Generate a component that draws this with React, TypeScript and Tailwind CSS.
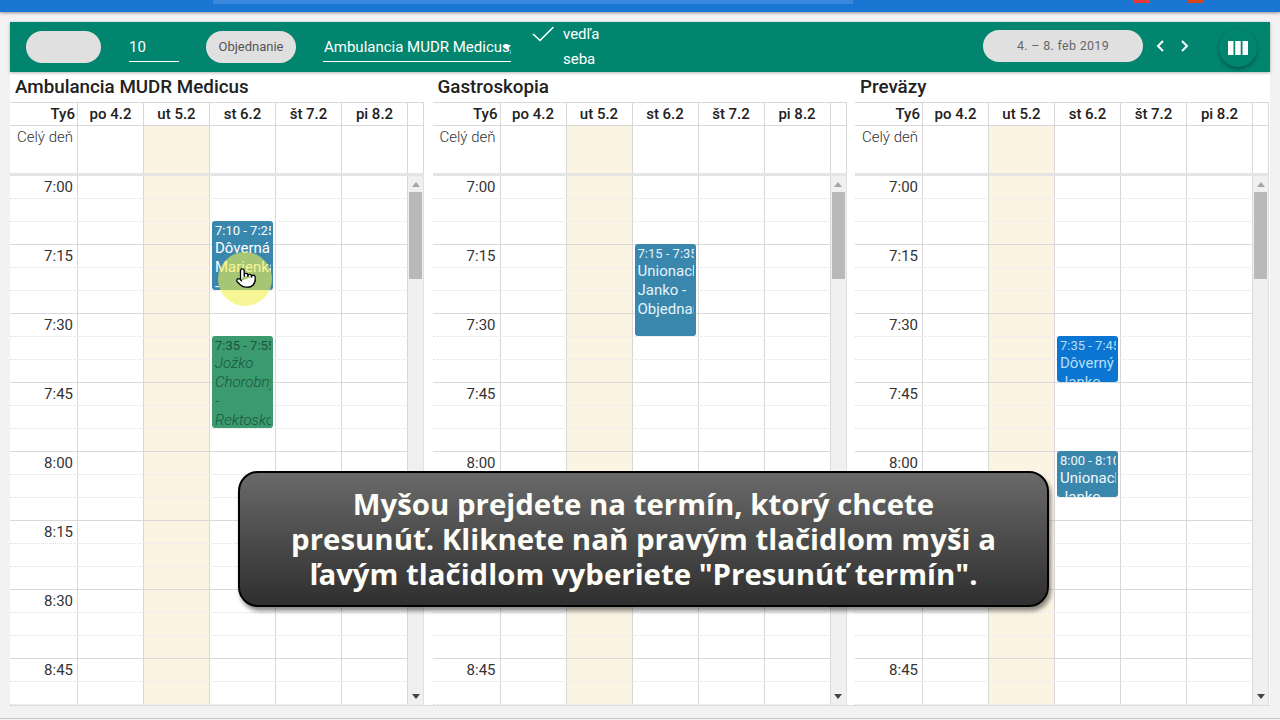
import { Pointer } from "lucide-react";

const days = ["po 4.2", "ut 5.2", "st 6.2", "št 7.2", "pi 8.2"];
const times = ["7:00", "7:15", "7:30", "7:45", "8:00", "8:15", "8:30", "8:45"];
const rows = Array.from({ length: 24 }, (_, i) => i);

type Ev = {
  top: number;
  height: number;
  time: string;
  lines: string[];
  color: string;
};

const calendars: { title: string; events: Ev[] }[] = [
  {
    title: "Ambulancia MUDR Medicus",
    events: [
      { top: 46, height: 69, time: "7:10 - 7:25", lines: ["Dôverná", "Marienka", "-"], color: "bg-[#3a87ad] text-white" },
      { top: 161, height: 92, time: "7:35 - 7:55", lines: ["Jožko", "Chorobný", "-", "Rektoskopia"], color: "bg-[#3c9a6f] text-[#17563c] italic font-light" },
    ],
  },
  {
    title: "Gastroskopia",
    events: [
      { top: 69, height: 92, time: "7:15 - 7:35", lines: ["Unionachl", "Janko -", "Objednanie"], color: "bg-[#3a87ad] text-[#e4f3fb]" },
    ],
  },
  {
    title: "Preväzy",
    events: [
      { top: 161, height: 46, time: "7:35 - 7:45", lines: ["Dôverný", "Janko"], color: "bg-[#0b76d1] text-[#b5def8]" },
      { top: 276, height: 46, time: "8:00 - 8:10", lines: ["Unionachl", "Janko"], color: "bg-[#3a87ad] text-[#eef7fc]" },
    ],
  },
];

function Calendar({ title, events, cursor }: { title: string; events: Ev[]; cursor?: boolean }) {
  return (
    <div className="w-[414px] flex flex-col">
      <div className="h-[30px] pl-[5px] flex items-center text-[18.8px] font-medium text-[#212121] leading-none pt-[1px]">{title}</div>

      <div className="flex h-[22px] border-t border-[#d8d8d8] border-b text-[15px] font-medium text-[#212121] box-content">
        <div className="w-[68px] border-r border-[#d8d8d8] text-right pr-[2px] leading-[22px]">Ty6</div>
        {days.map((d) => (
          <div key={d} className="w-[66px] border-r border-[#d8d8d8] text-center leading-[22px]">{d}</div>
        ))}
        <div className="flex-1 border-r border-[#d8d8d8]" />
      </div>

      <div className="flex h-[47px] border-b-[3px] border-[#e4e4e4] box-content">
        <div className="w-[68px] border-r border-[#d8d8d8] text-right pr-[4px] text-[15px] font-light text-[#333]">Celý deň</div>
        {days.map((d, i) => (
          <div key={d} className={`w-[66px] border-r border-[#d8d8d8] ${i === 1 ? "bg-[#fbf4e2]" : ""}`} />
        ))}
        <div className="flex-1 border-r border-[#d8d8d8]" />
      </div>

      <div className="flex h-[530px] overflow-hidden">
        <div className="relative w-[398px]">
          {rows.map((r) => (
            <div key={r} className={`flex h-[23px] border-b ${r % 3 === 2 ? "border-solid border-[#d9d9d9]" : "border-dotted border-[#e0e0e0]"}`}>
              <div className="w-[68px] border-r border-solid border-r-[#d8d8d8] text-right pr-[4px] text-[15px] text-[#333] leading-[22px]">
                {r % 3 === 0 ? times[r / 3] : ""}
              </div>
              {days.map((d, i) => (
                <div key={d} className={`w-[66px] border-r border-solid border-r-[#d8d8d8] ${i === 1 ? "bg-[#fbf4e2]" : ""}`} />
              ))}
            </div>
          ))}
          {events.map((e) => (
            <div
              key={e.time}
              className={`absolute left-[202px] w-[61px] overflow-hidden rounded-[3px] pl-[3px] pr-[2px] ${e.color}`}
              style={{ top: e.top - 1, height: e.height }}
            >
              <div className="overflow-hidden whitespace-nowrap text-[13px] pt-[1px] leading-[17px] not-italic font-normal">{e.time}</div>
              {e.lines.map((l) => (
                <div key={l} className="overflow-hidden whitespace-nowrap text-[15px] leading-[19px]">{l}</div>
              ))}
            </div>
          ))}
          {cursor && (
            <>
              <div className="absolute left-[208px] top-[76px] size-[54px] rounded-full bg-[#f0f050]/60" />
              <Pointer className="absolute left-[225px] top-[91px] size-[22px] fill-white text-black" strokeWidth={1.4} />
            </>
          )}
        </div>
        <div className="flex-1 border-r border-[#e0e0e0] bg-[#f0f0f0] flex flex-col items-center px-[1px] pt-[6px]">
          <div className="w-0 h-0 border-x-[4px] border-x-transparent border-b-[5px] border-b-[#a5a5a5]" />
          <div className="mt-[5px] w-[13px] h-[87px] bg-[#b9b9b9]" />
          <div className="flex-1" />
          <div className="mb-[6px] w-0 h-0 border-x-[4px] border-x-transparent border-t-[5px] border-t-[#444]" />
        </div>
      </div>
    </div>
  );
}

export default function App() {
  return (
    <div className="relative h-[720px] w-[1280px] overflow-hidden bg-[#f2f2f2]" style={{ fontFamily: "Roboto, sans-serif" }}>
      <div className="h-[12px] bg-[#1976d2] shadow-[0_1px_3px_rgba(0,0,0,0.4)] flex items-start pl-[213px]">
        <div className="w-[640px] h-[4px] bg-[#3a88dd]" />
        <div className="ml-[280px] w-[17px] h-[3px] bg-[#e53935]" />
        <div className="ml-[38px] w-[16px] h-[3px] bg-[#d84315]" />
      </div>

      <div className="mt-[10px] mx-[10px] h-[50px] bg-[#02856f] shadow-[0_1px_3px_rgba(0,0,0,0.3)] flex items-center text-white relative z-10">
        <div className="ml-[16px] w-[75px] h-[32px] rounded-full bg-[#e0e0e0]" />
        <div className="ml-[28px] w-[50px] h-[30px] border-b border-white text-[15px] leading-[30px]">10</div>
        <div className="ml-[27px] w-[90px] h-[32px] rounded-full bg-[#e0e0e0] text-[#555] text-[13px] flex items-center justify-center">Objednanie</div>
        <div className="ml-[27px] w-[188px] h-[30px] border-b border-white text-[15px] leading-[30px] whitespace-nowrap overflow-hidden pl-[1px] relative">
          Ambulancia MUDR Medicus,
          <div className="absolute right-0 top-[13px] w-0 h-0 border-x-[4px] border-x-transparent border-t-[5px] border-t-white" />
        </div>
        <svg className="ml-[20px] mt-[-26px]" width="24" height="16" viewBox="0 0 24 16" fill="none" stroke="white" strokeWidth="1.6">
          <path d="M2 8 L9 14.5 L22.5 1" />
        </svg>
        <div className="ml-[8px] text-[15px] leading-[25px] mt-[-1px]">
          <div>vedľa</div>
          <div>seba</div>
        </div>
        <div className="flex-1" />
        <div className="w-[160px] h-[32px] rounded-full bg-[#e0e0e0] text-[#666] text-[12.5px] tracking-[0.3px] flex items-center justify-center mt-[-2px]">4. – 8. feb 2019</div>
        <svg className="ml-[11px] mt-[-3px]" width="12" height="14" viewBox="0 0 12 14" fill="none" stroke="white" strokeWidth="2"><path d="M9 2 L4 7 L9 12" /></svg>
        <svg className="ml-[13px] mt-[-3px]" width="12" height="14" viewBox="0 0 12 14" fill="none" stroke="white" strokeWidth="2"><path d="M3 2 L8 7 L3 12" /></svg>
        <div className="ml-[28px] mr-[13px] mt-[2px] size-[38px] rounded-full bg-[#02856f] shadow-[0_2px_4px_rgba(0,0,0,0.35)] flex items-center justify-center">
          <svg width="20" height="14" viewBox="0 0 20 14" fill="white">
            <rect x="0" y="0" width="5.5" height="14" />
            <rect x="7.2" y="0" width="5.5" height="14" />
            <rect x="14.5" y="0" width="5.5" height="14" />
          </svg>
        </div>
      </div>

      <div className="mx-[10px] bg-white flex gap-[8.5px] h-[634px] border-b border-[#dcdcdc]">
        <Calendar {...calendars[0]} cursor />
        <Calendar {...calendars[1]} />
        <Calendar {...calendars[2]} />
      </div>
      <div className="mt-[12px] h-[2px] border-t border-[#c4c4c4]" />

      <div className="absolute left-[238px] top-[471px] w-[811px] h-[136px] rounded-[20px] border-2 border-black bg-gradient-to-b from-[#6a6a6a] to-[#2f2f2f] shadow-[2px_4px_4px_rgba(0,0,0,0.45)] flex items-center justify-center text-center text-[#fdfdf8] font-bold text-[29.4px] leading-[35px]" style={{ fontFamily: '"Open Sans", sans-serif' }}>
        <div>
          Myšou prejdete na termín, ktorý chcete
          <br />
          presunúť. Kliknete naň pravým tlačidlom myši a
          <br />
          ľavým tlačidlom vyberiete "Presunúť termín".
        </div>
      </div>
    </div>
  );
}
